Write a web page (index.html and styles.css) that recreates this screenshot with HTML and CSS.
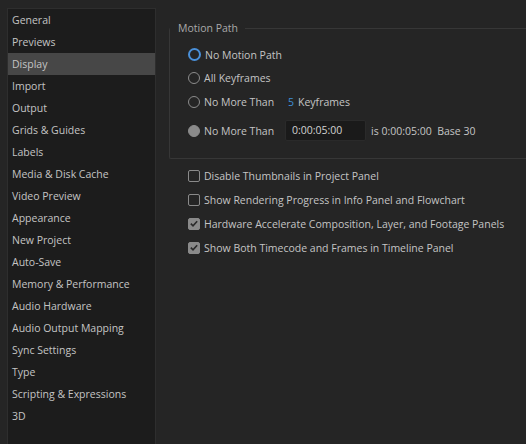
FILE: index.html
```html
<!DOCTYPE html>
<html lang="en">
<head>
    <meta charset="UTF-8">
    <title>Preferences - Display</title>
    <link rel="stylesheet" href="styles.css">
</head>
<body>
    <div class="window">
        <ul class="sidebar">
            <li>General</li>
            <li>Previews</li>
            <li class="active">Display</li>
            <li>Import</li>
            <li>Output</li>
            <li>Grids &amp; Guides</li>
            <li>Labels</li>
            <li>Media &amp; Disk Cache</li>
            <li>Video Preview</li>
            <li>Appearance</li>
            <li>New Project</li>
            <li>Auto-Save</li>
            <li>Memory &amp; Performance</li>
            <li>Audio Hardware</li>
            <li>Audio Output Mapping</li>
            <li>Sync Settings</li>
            <li>Type</li>
            <li>Scripting &amp; Expressions</li>
            <li>3D</li>
        </ul>
        <div class="content">
            <fieldset class="group">
                <legend>Motion Path</legend>
                <div class="group-body">
                    <div class="radio-row">
                        <span class="radio focus"></span>
                        <span>No Motion Path</span>
                    </div>
                    <div class="radio-row">
                        <span class="radio"></span>
                        <span>All Keyframes</span>
                    </div>
                    <div class="radio-row">
                        <span class="radio"></span>
                        <span class="label-fixed">No More Than</span>
                        <span class="num">5</span>
                        <span>Keyframes</span>
                    </div>
                    <div class="radio-row tall">
                        <span class="radio filled"></span>
                        <span class="label-fixed">No More Than</span>
                        <span class="timecode">0:00:05:00</span>
                        <span class="note">is 0:00:05:00&nbsp;&nbsp;Base 30</span>
                    </div>
                </div>
            </fieldset>
            <div class="checks">
                <div class="check-row">
                    <span class="box"></span>
                    <span>Disable Thumbnails in Project Panel</span>
                </div>
                <div class="check-row">
                    <span class="box"></span>
                    <span>Show Rendering Progress in Info Panel and Flowchart</span>
                </div>
                <div class="check-row">
                    <span class="box checked"><svg width="11" height="11" viewBox="0 0 11 11"><path d="M2 5.6 L4.4 8 L9 3" fill="none" stroke="#2a2a2a" stroke-width="1.8"/></svg></span>
                    <span>Hardware Accelerate Composition, Layer, and Footage Panels</span>
                </div>
                <div class="check-row">
                    <span class="box checked"><svg width="11" height="11" viewBox="0 0 11 11"><path d="M2 5.6 L4.4 8 L9 3" fill="none" stroke="#2a2a2a" stroke-width="1.8"/></svg></span>
                    <span>Show Both Timecode and Frames in Timeline Panel</span>
                </div>
            </div>
        </div>
    </div>
</body>
</html>
```

FILE: styles.css
```css
html, body {
    margin: 0;
    padding: 0;
    height: 100%;
    overflow: hidden;
}
body {
    background-color: #252525;
    font-family: "Open Sans", "Liberation Sans", sans-serif;
    font-size: 10.5px;
    color: #c4c4c4;
}
.window {
    display: flex;
    height: 100%;
}
.sidebar {
    list-style: none;
    margin: 8px 0 0 7px;
    padding: 0;
    width: 147px;
    flex-shrink: 0;
    background-color: #1c1c1c;
    border: 1px solid #2e2e2e;
    border-bottom: none;
}
.sidebar li {
    height: 22px;
    line-height: 22px;
    padding-left: 4px;
    white-space: nowrap;
}
.sidebar li.active {
    background-color: #474747;
}
.content {
    flex: 1;
    min-width: 0;
    padding-left: 13px;
}
.group {
    margin: 21px 0 0 0;
    padding: 8px 0 10px 0;
    border: 1px solid #373737;
    border-right: none;
    border-radius: 2px 0 0 2px;
}
.group legend {
    padding: 0 7px 0 8px;
    color: #a9a9a9;
}
.group-body {
    padding-left: 18px;
}
.radio-row {
    display: flex;
    align-items: center;
    height: 23.5px;
    white-space: nowrap;
}
.radio-row.tall {
    height: 34px;
}
.radio {
    width: 10px;
    height: 10px;
    border: 1.5px solid #8c8c8c;
    border-radius: 50%;
    margin-right: 4px;
    flex-shrink: 0;
}
.radio.focus {
    border: 2px solid #4a90d9;
    width: 9px;
    height: 9px;
}
.radio.filled {
    background-color: #8a8a8a;
}
.label-fixed {
    width: 83px;
}
.num {
    color: #3f8fd8;
    margin-left: 1px;
    margin-right: 4px;
}
.timecode {
    display: inline-block;
    width: 73px;
    height: 19px;
    line-height: 19px;
    padding-left: 6px;
    background-color: #1a1a1a;
    border: 1px solid #2a2a2a;
    border-radius: 2px;
    color: #d2d2d2;
    margin-left: -2px;
    margin-right: 5px;
}
.checks {
    padding: 5px 0 0 19px;
}
.check-row {
    display: flex;
    align-items: center;
    height: 24px;
    white-space: nowrap;
}
.box {
    width: 10px;
    height: 10px;
    border: 1.5px solid #8a8a8a;
    border-radius: 2px;
    margin-right: 4px;
    flex-shrink: 0;
    display: flex;
    align-items: center;
    justify-content: center;
}
.box.checked {
    background-color: #8a8a8a;
}
.box svg {
    display: block;
}
```
